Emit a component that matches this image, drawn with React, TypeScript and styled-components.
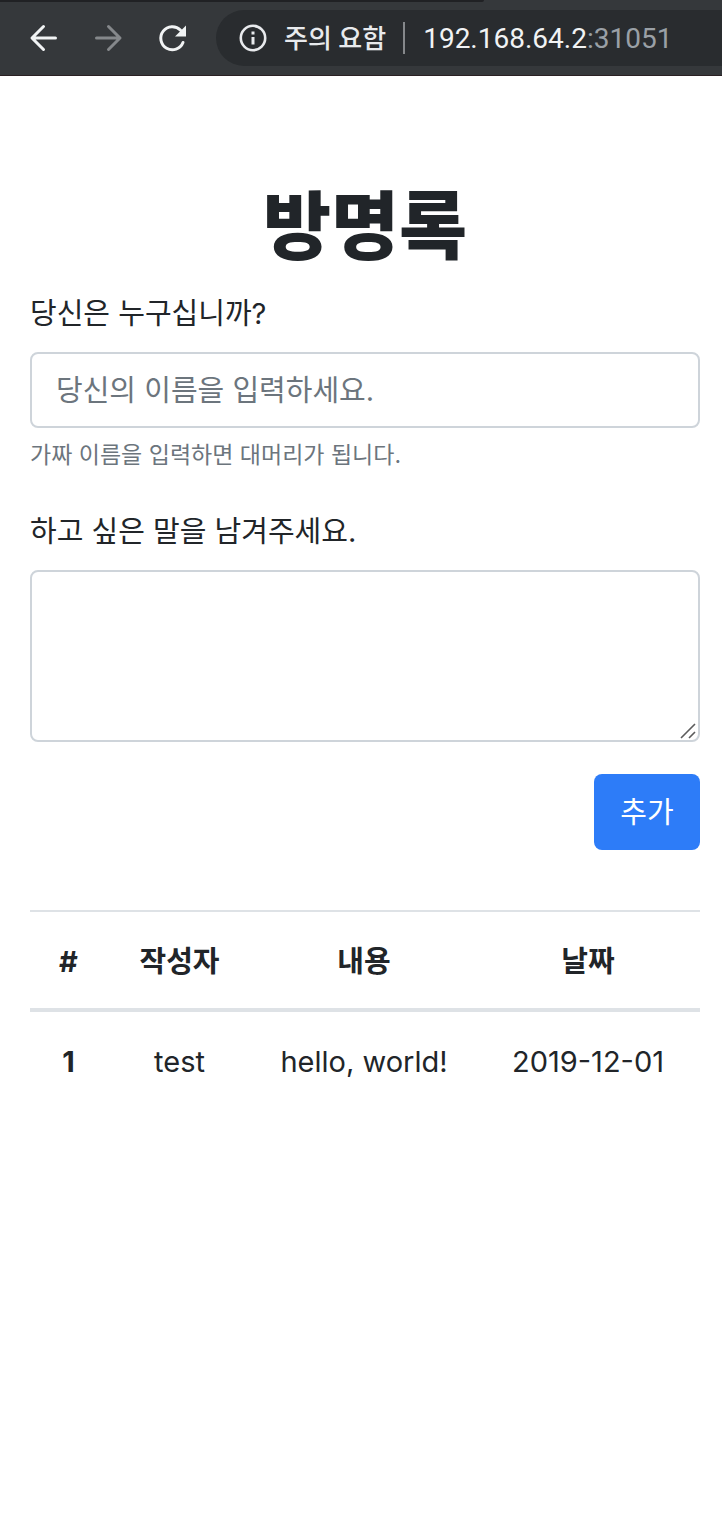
import React from "react";
import styled, { createGlobalStyle } from "styled-components";

const GlobalStyle = createGlobalStyle`
  *, *::before, *::after { box-sizing: border-box; }
  body {
    margin: 0;
    background: #fff;
    color: #212529;
    font-family: Inter, "Noto Sans CJK KR", sans-serif;
    font-size: 29px;
    line-height: 48px;
  }
`;

const Toolbar = styled.header`
  position: relative;
  display: flex;
  align-items: center;
  height: 76px;
  padding-left: 28px;
  background: #35383b;
  border-bottom: 1px solid #2a2023;
`;

const TabEdge = styled.div`
  position: absolute;
  top: 0;
  left: 0;
  width: 67%;
  height: 2px;
  background: #202124;
  border-bottom-right-radius: 2px;
`;

const NavButton = styled.button`
  display: flex;
  width: 32px;
  height: 32px;
  margin-right: 32px;
  padding: 0;
  border: 0;
  background: none;
  color: #f1f3f4;

  &:disabled { color: #85888b; }
`;

const AddressBar = styled.div`
  display: flex;
  flex: 1;
  align-items: center;
  height: 56px;
  padding-left: 22px;
  margin-left: -4px;
  background: #292c2f;
  border-radius: 28px 0 0 28px;
  color: #e8eaed;
  font-family: Roboto, "Noto Sans CJK KR", sans-serif;
  font-size: 28px;
  line-height: 40px;
  white-space: nowrap;
`;

const Security = styled.span`
  margin-left: 16px;
  padding-top: 2px;
  font-size: 26px;
  font-weight: 500;
`;

const Divider = styled.span`
  width: 2px;
  height: 32px;
  margin: 0 18px 0 17px;
  background: #85888b;
`;

const Address = styled.span`
  padding-top: 2px;
  color: #f1f3f4;
`;

const Port = styled.span`
  color: #9aa0a6;
`;

const Page = styled.main`
  padding: 100px 22px 32px 30px;
`;

const Title = styled.h1`
  margin: 0 0 14px;
  font-size: 74px;
  font-weight: 900;
  line-height: 100px;
  text-align: center;
`;

const Field = styled.div`
  margin-bottom: 32px;
`;

const Label = styled.label`
  display: block;
  margin-bottom: 14px;
`;

const TextInput = styled.input`
  display: block;
  width: 100%;
  height: 76px;
  padding: 12px 24px;
  border: 2px solid #ced4da;
  border-radius: 8px;
  background: #fff;
  color: #495057;
  font: inherit;

  &::placeholder { color: #6c757d; opacity: 1; }
`;

const Hint = styled.small`
  display: block;
  margin: 8px 0 34px;
  color: #6c757d;
  font-size: 23px;
  line-height: 38px;
`;

const AreaFrame = styled.div`
  position: relative;
`;

const TextArea = styled.textarea`
  display: block;
  width: 100%;
  height: 172px;
  padding: 12px 24px;
  border: 2px solid #ced4da;
  border-radius: 8px;
  background: #fff;
  color: #495057;
  font: inherit;
  resize: vertical;

  &::-webkit-resizer { display: none; }
`;

const Grip = styled.svg`
  position: absolute;
  right: 4px;
  bottom: 3px;
  pointer-events: none;
`;

const Actions = styled.div`
  display: flex;
  justify-content: flex-end;
  margin-bottom: 60px;
`;

const SubmitButton = styled.button`
  min-width: 106px;
  height: 76px;
  padding: 2px 26px 0;
  border: 0;
  border-radius: 8px;
  background: #2d7cf8;
  color: #fff;
  font: inherit;
`;

const Table = styled.table`
  width: 100%;
  table-layout: fixed;
  border-collapse: collapse;
  text-align: center;

  th, td { padding: 26px 0 22px; }
  thead th {
    border-top: 2px solid #dee2e6;
    border-bottom: 4px solid #dee2e6;
  }
`;

const NumberColumn = styled.col`
  width: 77px;
`;

const AuthorColumn = styled.col`
  width: 145px;
`;

const entries = [
  { id: 1, author: "test", content: "hello, world!", date: "2019-12-01" },
];

function ArrowIcon({ forward = false }: { forward?: boolean }) {
  return (
    <svg width="32" height="32" viewBox="0 0 32 32" fill="none" stroke="currentColor" strokeWidth="3" strokeLinecap="round" strokeLinejoin="round" aria-hidden="true">
      <path d={forward ? "M4.5 16H27.5M16.5 4.5L28 16L16.5 27.5" : "M27.5 16H4.5M15.5 4.5L4 16L15.5 27.5"} />
    </svg>
  );
}

function ReloadIcon() {
  return (
    <svg width="32" height="32" viewBox="0 0 32 32" fill="none" aria-hidden="true">
      <path d="M27 20.5A11.5 11.5 0 1 1 24.6 8.3" stroke="currentColor" strokeWidth="3" strokeLinecap="round" />
      <path d="M30 3.5V14.5H19Z" fill="currentColor" />
    </svg>
  );
}

function InfoIcon() {
  return (
    <svg width="30" height="30" viewBox="0 0 30 30" fill="none" aria-hidden="true">
      <circle cx="15" cy="15" r="12.2" stroke="currentColor" strokeWidth="2.6" />
      <path d="M15 14V21.5M15 8.5V11.5" stroke="currentColor" strokeWidth="3" />
    </svg>
  );
}

export default function App() {
  return (
    <>
      <GlobalStyle />
      <Toolbar>
        <TabEdge />
        <NavButton type="button" aria-label="뒤로"><ArrowIcon /></NavButton>
        <NavButton type="button" aria-label="앞으로" disabled><ArrowIcon forward /></NavButton>
        <NavButton type="button" aria-label="새로고침"><ReloadIcon /></NavButton>
        <AddressBar>
          <InfoIcon />
          <Security>주의 요함</Security>
          <Divider />
          <Address>192.168.64.2<Port>:31051</Port></Address>
        </AddressBar>
      </Toolbar>
      <Page>
        <Title>방명록</Title>
        <form onSubmit={(event) => event.preventDefault()}>
          <Label htmlFor="author">당신은 누구십니까?</Label>
          <TextInput id="author" type="text" placeholder="당신의 이름을 입력하세요." aria-describedby="author-hint" />
          <Hint id="author-hint">가짜 이름을 입력하면 대머리가 됩니다.</Hint>
          <Field>
            <Label htmlFor="message">하고 싶은 말을 남겨주세요.</Label>
            <AreaFrame>
              <TextArea id="message" />
              <Grip width="16" height="16" viewBox="0 0 16 16" stroke="#5c5c5c" strokeWidth="1.6" aria-hidden="true">
                <path d="M1 15L15 1M9 15L15 9" />
              </Grip>
            </AreaFrame>
          </Field>
          <Actions>
            <SubmitButton type="submit">추가</SubmitButton>
          </Actions>
        </form>
        <Table>
          <colgroup>
            <NumberColumn />
            <AuthorColumn />
            <col />
            <col />
          </colgroup>
          <thead>
            <tr>
              <th scope="col">#</th>
              <th scope="col">작성자</th>
              <th scope="col">내용</th>
              <th scope="col">날짜</th>
            </tr>
          </thead>
          <tbody>
            {entries.map((entry) => (
              <tr key={entry.id}>
                <th scope="row">{entry.id}</th>
                <td>{entry.author}</td>
                <td>{entry.content}</td>
                <td>{entry.date}</td>
              </tr>
            ))}
          </tbody>
        </Table>
      </Page>
    </>
  );
}
